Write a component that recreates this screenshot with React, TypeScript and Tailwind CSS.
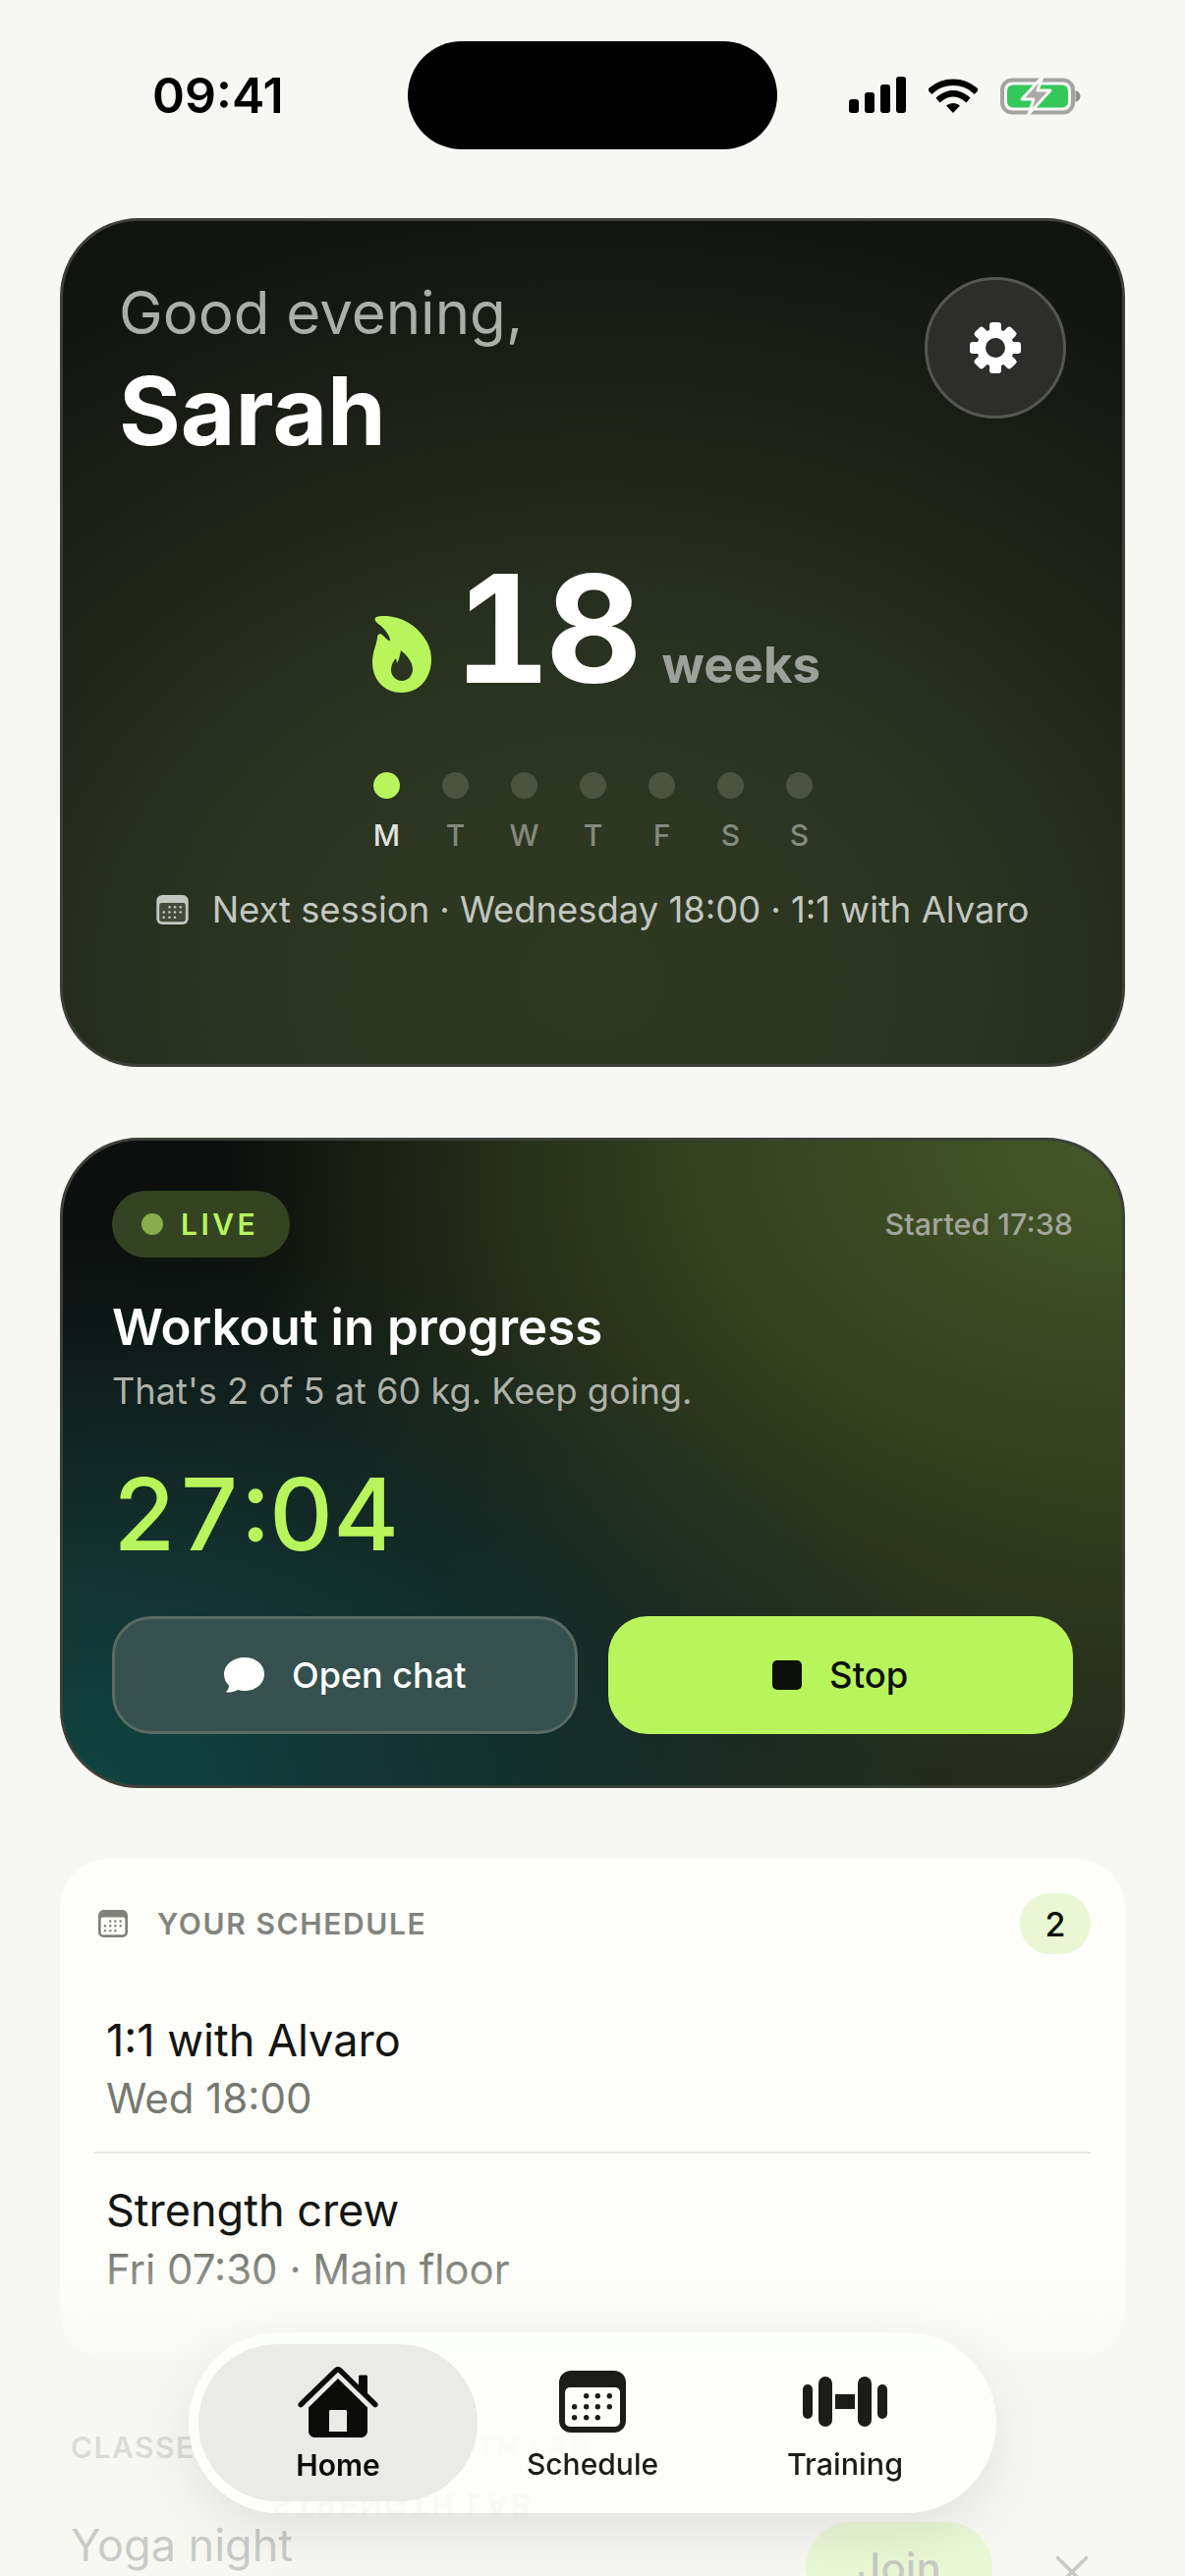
import { X } from 'lucide-react';

const days = [
  { label: 'M', active: true },
  { label: 'T' },
  { label: 'W' },
  { label: 'T' },
  { label: 'F' },
  { label: 'S' },
  { label: 'S' },
];

const sessions = [
  { title: '1:1 with Alvaro', meta: 'Wed 18:00' },
  { title: 'Strength crew', meta: 'Fri 07:30 · Main floor' },
];

const calendarDots = [
  [27.7, 25.7], [39.3, 25.7], [51.3, 25.7],
  [15.6, 36.7], [27.7, 36.7], [39.3, 36.7], [51.3, 36.7],
  [15.6, 47.7], [27.7, 47.7], [39.3, 47.7],
];

function CalendarIcon({ className, body, dots }: { className?: string; body: string; dots: string }) {
  return (
    <svg viewBox="0 0 68 63" className={className}>
      <rect width="68" height="63" rx="12" fill="currentColor" />
      <rect x="6" y="17" width="56" height="40" rx="5" fill={body} />
      {calendarDots.map(([x, y]) => (
        <circle key={`${x}-${y}`} cx={x} cy={y} r="2.700" fill={dots} />
      ))}
    </svg>
  );
}

function GearIcon() {
  return (
    <svg viewBox="-26 -26 52 52" className="h-[52px] w-[52px]">
      {[0, 45, 90, 135].map((deg) => (
        <rect key={deg} x="-6" y="-26" width="12" height="52" rx="3" fill="#fff" transform={`rotate(${deg})`} />
      ))}
      <circle r="19" fill="#fff" />
      <circle r="10" fill="#2d2e2b" />
    </svg>
  );
}

function HomeIcon() {
  return (
    <svg viewBox="0 0 82 72" className="h-[72px] w-[82px] text-[#0b0c0a]" fill="currentColor">
      <path d="M41 0c1.500 0 2.700.600 3.700 1.600L62 18.500V10c0-.900.600-1.500 1.500-1.500h6c.900 0 1.500.600 1.500 1.500v17l9.800 9.600c1.200 1.200 1.200 2.900.1 4-1.100 1.100-2.800 1-3.900-.1L41 5.500 5 40.500c-1.100 1.100-2.800 1.200-3.900.1-1.100-1.100-1.100-2.800.1-4L37.300 1.600C38.300.600 39.500 0 41 0Z" />
      <path fillRule="evenodd" d="M41 12 71 41.500V65c0 4.300-2.700 7-7 7H18c-4.300 0-7-2.700-7-7V41.500ZM33.500 44c-1 0-1.500.500-1.500 1.500V66h18V45.500c0-1-.500-1.500-1.500-1.500Z" />
    </svg>
  );
}

function DumbbellIcon() {
  return (
    <svg viewBox="0 0 86 51" className="h-[51px] w-[86px] text-[#1c1c19]" fill="currentColor">
      <rect x="0" y="8" width="10" height="35" rx="5" />
      <rect x="16" y="0" width="14" height="51" rx="7" />
      <rect x="33" y="18" width="20" height="15" />
      <rect x="56" y="0" width="14" height="51" rx="7" />
      <rect x="76" y="8" width="10" height="35" rx="5" />
    </svg>
  );
}

function StatusIcons() {
  return (
    <div className="flex items-center gap-[23px]">
      <svg viewBox="0 0 58 38" className="h-[38px] w-[58px] fill-black">
        <rect x="0" y="23" width="10" height="14" rx="3" />
        <rect x="16" y="16" width="10" height="21" rx="3" />
        <rect x="32" y="8" width="10" height="29" rx="3" />
        <rect x="48" y="0" width="10" height="37" rx="3" />
      </svg>
      <svg viewBox="0 0 50 36" className="h-[36px] w-[50px]">
        <path d="M3.500 12.500C15 2 35 2 46.500 12.500" fill="none" stroke="#000" strokeWidth="6.500" strokeLinecap="square" />
        <path d="M12 21c8-6.500 18-6.500 26 0" fill="none" stroke="#000" strokeWidth="6.500" strokeLinecap="square" />
        <path d="M18 28.500c4-3.500 10-3.500 14 0L25 36Z" fill="#000" />
      </svg>
      <svg viewBox="0 0 82 40" className="h-[40px] w-[82px]">
        <rect x="2" y="4.500" width="72" height="33" rx="10" fill="none" stroke="#a3a3a1" strokeWidth="4" />
        <rect x="7" y="9.500" width="62" height="23" rx="6" fill="#34c759" />
        <path d="M76.500 15c3 1 5 3 5 6s-2 5-5 6Z" fill="#8d8d8b" />
        <path d="M43 1 22 24h12l-5 15 22-24H38Z" fill="#a9a9a7" stroke="#f7f8f4" strokeWidth="3" strokeLinejoin="round" />
      </svg>
    </div>
  );
}

export default function App() {
  return (
    <div className="relative h-[2622px] w-[1206px] overflow-hidden bg-[#f7f8f4] font-['Inter',sans-serif]">
      {/* Status bar */}
      <div className="grid h-[222px] grid-cols-[1fr_376px_1fr] items-start pt-[42px]">
        <div className="flex h-[110px] items-center pl-[155px] text-[50px] font-semibold text-black">09:41</div>
        <div className="h-[110px] rounded-[55px] bg-black" />
        <div className="flex h-[110px] items-center justify-end pr-[106px]">
          <StatusIcons />
        </div>
      </div>

      <div className="flex flex-col gap-[72px] px-[61px]">
        {/* Hero */}
        <section className="relative h-[864px] rounded-[80px] border-[3px] border-[#3c4038] bg-[radial-gradient(ellipse_95%_95%_at_50%_90%,#2f3a22_0%,#2a3320_40%,#1d2118_72%,#111310_100%)] px-[57px] pt-[55px]">
          <div className="text-[60px] leading-[76px] text-[#acaeaa]">Good evening,</div>
          <div className="mt-[8px] text-[96px] font-bold leading-[108px] text-white">Sarah</div>
          <button className="absolute right-[57px] top-[57px] flex h-[144px] w-[144px] items-center justify-center rounded-full border-[3px] border-[#555753] bg-[#2d2e2b]">
            <GearIcon />
          </button>

          <div className="mt-[93px] flex items-end justify-center pl-[8px]">
            <svg viewBox="0 0 60 78" className="mb-[10px] mr-[23px] h-[78px] w-[60px]">
              <path fill="#b8f55c" d="M4 1C14-2 33 1 46 14c10 10 14 20 14 30 0 20-13 34-30 34C12 78 0 65 0 47c0-10 4-17 5-25 0-4 3-5 6-2 3 3 6 6 7 5 0-5-6-13-12-17C3 6 1 3 4 1Z" />
              <path fill="#2b3420" d="M29 35c6 5 12 12 12 19 0 7-5 12-11 12-6 0-11-5-11-11 0-5 2-9 5-12l1 5c2-3 3-8 4-13Z" />
            </svg>
            <span className="text-[152px] font-bold leading-[150px] tracking-[-5px] text-white tabular-nums">18</span>
            <span className="mb-[8px] ml-[25px] text-[51px] font-bold leading-[60px] text-[#9da19a]">weeks</span>
          </div>

          <div className="mt-[71px] flex justify-center pl-[1px]">
            <div className="flex gap-[43px]">
              {days.map((day, i) => (
                <div key={i} className="flex w-[27px] flex-col items-center">
                  <div className={`h-[27px] w-[27px] rounded-full ${day.active ? 'bg-[#b8f55c]' : 'bg-[#4c5440]'}`} />
                  <span className={`mt-[20px] text-[30px] font-medium leading-[34px] ${day.active ? 'text-[#e2e3df]' : 'text-[#858a7e]'}`}>{day.label}</span>
                </div>
              ))}
            </div>
          </div>

          <div className="mt-[36px] flex items-center justify-center gap-[24px]">
            <CalendarIcon className="h-[30px] w-[33px] text-[#c4c7c0]" body="#454b3a" dots="#c4c7c0" />
            <span className="text-[36.400px] leading-[46px] text-[#c4c7c0]">Next session · Wednesday 18:00 · 1:1 with Alvaro</span>
          </div>
        </section>

        {/* Live workout */}
        <section className="h-[662px] rounded-[80px] border-[3px] border-[#3c4038] bg-[radial-gradient(ellipse_85%_85%_at_0%_100%,#104542_0%,#123230_40%,#12302e00_100%),radial-gradient(ellipse_85%_100%_at_100%_0%,#465828_0%,#36421f_45%,#36421f00_100%),linear-gradient(135deg,#0c0f0d_15%,#242a1c_85%)] px-[50px] pt-[51px]">
          <div className="flex items-center justify-between">
            <div className="flex h-[68px] items-center gap-[18px] rounded-full bg-[#344321] pl-[30px] pr-[32px]">
              <span className="h-[22px] w-[22px] rounded-full bg-[#88ad4d]" />
              <span className="text-[30px] font-semibold tracking-[3.500px] text-[#b8f55c]">LIVE</span>
            </div>
            <span className="text-[30.500px] font-medium text-[#a2a69c]">Started 17:38</span>
          </div>
          <div className="mt-[40px] text-[51px] font-semibold leading-[62px] text-white">Workout in progress</div>
          <div className="mt-[10px] text-[36.200px] leading-[48px] text-[#aeb2aa]">That's 2 of 5 at 60 kg. Keep going.</div>
          <div className="mt-[43px] text-[102px] font-medium leading-[116px] text-[#b8f55c] tabular-nums">27:04</div>
          <div className="mt-[46px] flex gap-[31px]">
            <button className="flex h-[120px] flex-1 items-center justify-center gap-[28px] rounded-[40px] border-[3px] border-[#5b6a63] bg-[#36504d] text-[36px] font-medium text-white">
              <svg viewBox="0 0 42 36" className="h-[36px] w-[42px] fill-white">
                <path d="M22 0c11 0 20 7 20 17s-9 17-20 17c-3 0-5-.500-7-1-3 2-7 2.500-11 2.500-1 0-1-.500-.500-1 1.500-1.500 2.500-3.500 2.500-6C3 26 1 22 1 17 1 7 11 0 22 0Z" />
              </svg>
              Open chat
            </button>
            <button className="flex h-[120px] flex-1 items-center justify-center gap-[28px] rounded-[40px] border-[3px] border-transparent bg-[#b8f55c] text-[36.500px] font-medium text-[#0d0f0b]">
              <span className="h-[30px] w-[30px] rounded-[5px] bg-[#0d0f0b]" />
              Stop
            </button>
          </div>
        </section>

        {/* Schedule */}
        <section className="h-[510px] rounded-[50px] bg-[#fdfef9] px-[35px] pt-[35px]">
          <div className="flex items-center justify-between">
            <div className="flex items-center gap-[30px] pl-[4px]">
              <CalendarIcon className="h-[28px] w-[30px] text-[#7f817b]" body="#fdfef9" dots="#7f817b" />
              <span className="text-[30px] font-semibold tracking-[1.600px] text-[#82847e]">YOUR SCHEDULE</span>
            </div>
            <div className="flex h-[62px] w-[72px] items-center justify-center rounded-full bg-[#e9f7d4] text-[34px] font-medium text-[#0d0f0b]">2</div>
          </div>
          {sessions.map((s, i) => (
            <div key={s.title} className={`pl-[12px] ${i === 0 ? 'mt-[59px] pb-[26px]' : 'border-t-2 border-[#e8e9e5] pt-[29px]'}`}>
              <div className="text-[45px] leading-[58px] text-[#141512]">{s.title}</div>
              <div className={`text-[42px] leading-[56px] text-[#767872] ${i === 0 ? 'mt-[2px]' : 'mt-[3px]'}`}>{s.meta}</div>
            </div>
          ))}
        </section>

        {/* Classes */}
        <section className="-mt-[5px] pl-[11px] pr-[25px]">
          <div className="text-[30px] font-semibold tracking-[1.500px] text-[#666862]">CLASSES AT THE STRENGTH LAB</div>
          <div className="mt-[48px] flex items-start">
            <span className="flex-1 text-[45px] leading-[58px] text-[#141512]">Yoga night</span>
            <button className="mt-[5px] h-[92px] w-[190px] rounded-[52px] bg-[#b8f55c] text-[42px] font-medium text-[#0d0f0b]">Join</button>
            <X size={58} strokeWidth={1.500} className="ml-[52px] mt-[27px] text-[#0d0f0b]" />
          </div>
        </section>
      </div>

      {/* Fade under the nav */}
      <div className="pointer-events-none absolute inset-x-0 bottom-0 h-[330px] bg-gradient-to-b from-[#f7f8f400] via-[#f7f8f4cc] via-35% to-[#f7f8f4cc]" />

      {/* Bottom nav */}
      <nav className="absolute left-[192px] top-[2374px] flex h-[184px] w-[822px] items-center rounded-[92px] bg-[#fefffbd9] pl-[10px] shadow-[0_20px_60px_rgba(0,0,0,0.09)] backdrop-blur-[2px]">
        {/* glass reflection of the text underneath */}
        <span aria-hidden="true" className="absolute left-[85px] top-[166px] -scale-y-100 text-[30px] font-semibold leading-[20px] tracking-[3px] text-[#666862] opacity-[0.04] blur-[1px]">STRENGTH LAB</span>
        <div className="relative flex h-[160px] w-[284px] flex-col items-center rounded-[80px] bg-[#eaebe8] pt-[23px]">
          <HomeIcon />
          <span className="mt-[9px] text-[30px] font-semibold leading-[38px] text-[#0b0c0a]">Home</span>
        </div>
        <div className="flex w-[234px] flex-col items-center pt-[8px]">
          <CalendarIcon className="h-[63px] w-[68px] text-[#1c1c19]" body="#fdfef9" dots="#1c1c19" />
          <span className="mt-[13px] text-[30px] font-medium leading-[38px] text-[#1c1c19]">Schedule</span>
        </div>
        <div className="flex w-[280px] flex-col items-center pt-[8px]">
          <div className="flex h-[63px] items-center">
            <DumbbellIcon />
          </div>
          <span className="mt-[13px] text-[30.500px] font-medium leading-[38px] text-[#1c1c19]">Training</span>
        </div>
      </nav>
    </div>
  );
}
